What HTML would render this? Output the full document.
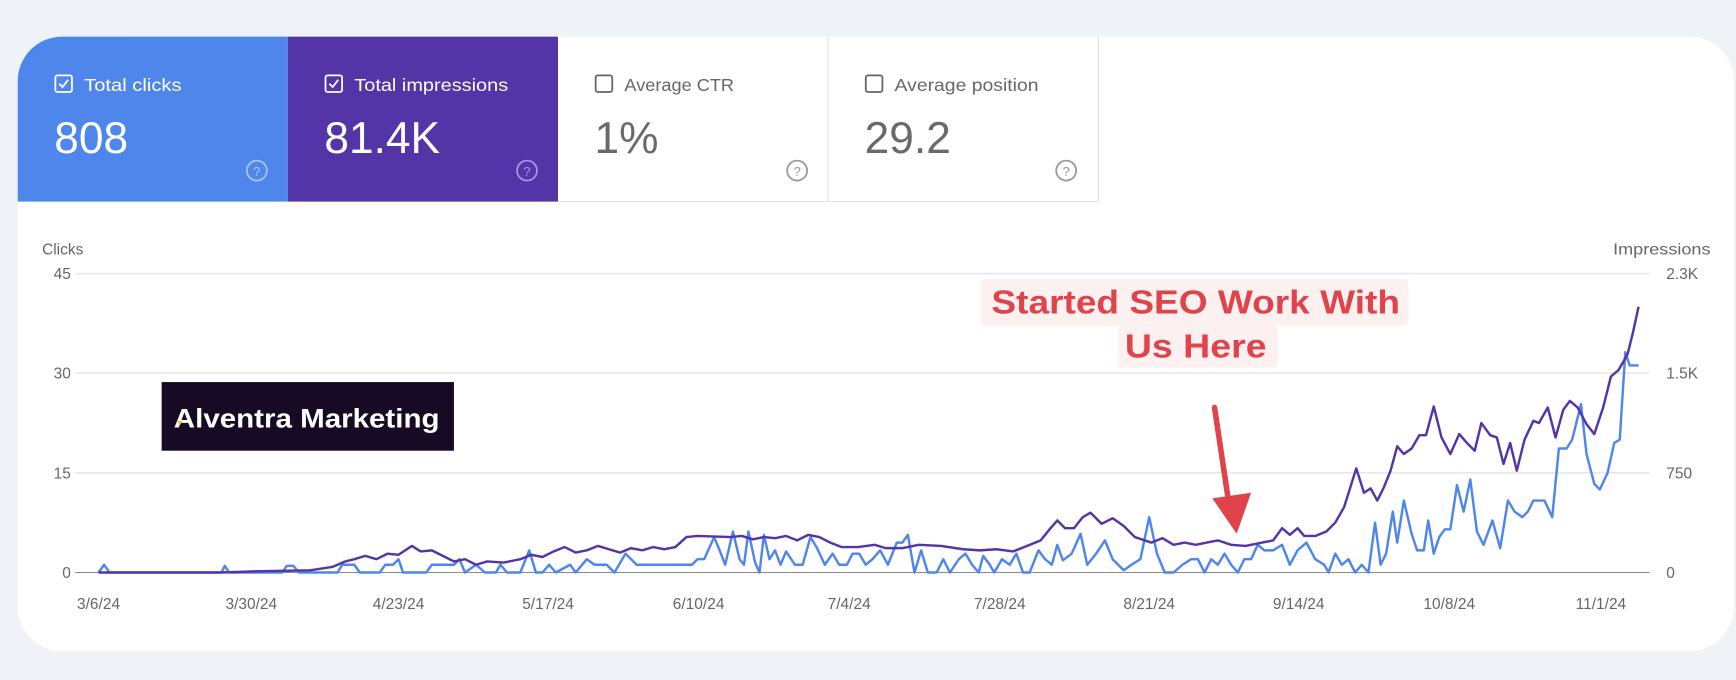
<!DOCTYPE html>
<html><head><meta charset="utf-8"><style>
html,body{margin:0;padding:0;background:#eff2f7;}
svg{display:block;font-family:"Liberation Sans",sans-serif;}
</style></head><body>
<svg width="1736" height="680" viewBox="0 0 1568 614" xmlns="http://www.w3.org/2000/svg">
<rect x="0" y="0" width="1568" height="614" fill="#eff2f7"/>
<rect x="16" y="33" width="1550" height="555" rx="40" fill="#fff"/>
<path d="M16 182 V73 A40 40 0 0 1 56 33 H260 V182 Z" fill="#4f86ec"/>
<rect x="260" y="33" width="244" height="149" fill="#5435a8"/>
<line x1="748" y1="33" x2="748" y2="182" stroke="#e2e2e2"/>
<line x1="992" y1="33" x2="992" y2="182" stroke="#e2e2e2"/>
<line x1="504" y1="182" x2="992" y2="182" stroke="#e2e2e2"/>
<!-- tab 1 -->
<rect x="50" y="68" width="15" height="15" rx="2" fill="none" stroke="#fff" stroke-width="1.6"/>
<path d="M53.5 75.5 l3 3 l5 -6.5" fill="none" stroke="#fff" stroke-width="1.6"/>
<text x="76" y="82" font-size="16" fill="#fff" textLength="88" lengthAdjust="spacingAndGlyphs">Total clicks</text>
<text x="49" y="138" font-size="40" fill="#fff">808</text>
<circle cx="232" cy="154" r="9" fill="none" stroke="#a9c4f5" stroke-width="1.6"/>
<text x="232" y="159" font-size="12" fill="#a9c4f5" text-anchor="middle">?</text>
<!-- tab 2 -->
<rect x="294" y="68" width="15" height="15" rx="2" fill="none" stroke="#fff" stroke-width="1.6"/>
<path d="M297.5 75.5 l3 3 l5 -6.5" fill="none" stroke="#fff" stroke-width="1.6"/>
<text x="320" y="82" font-size="16" fill="#fff" textLength="139" lengthAdjust="spacingAndGlyphs">Total impressions</text>
<text x="293" y="138" font-size="40" fill="#fff">81.4K</text>
<circle cx="476" cy="154" r="9" fill="none" stroke="#a994e0" stroke-width="1.6"/>
<text x="476" y="159" font-size="12" fill="#a994e0" text-anchor="middle">?</text>
<!-- tab 3 -->
<rect x="538" y="68" width="15" height="15" rx="2" fill="none" stroke="#666" stroke-width="1.6"/>
<text x="564" y="82" font-size="16" fill="#666" textLength="99" lengthAdjust="spacingAndGlyphs">Average CTR</text>
<text x="537" y="138" font-size="40" fill="#6a6a6a">1%</text>
<circle cx="720" cy="154" r="9" fill="none" stroke="#999" stroke-width="1.6"/>
<text x="720" y="159" font-size="12" fill="#999" text-anchor="middle">?</text>
<!-- tab 4 -->
<rect x="782" y="68" width="15" height="15" rx="2" fill="none" stroke="#666" stroke-width="1.6"/>
<text x="808" y="82" font-size="16" fill="#666" textLength="130" lengthAdjust="spacingAndGlyphs">Average position</text>
<text x="781" y="138" font-size="40" fill="#6a6a6a">29.2</text>
<circle cx="963" cy="154" r="9" fill="none" stroke="#999" stroke-width="1.6"/>
<text x="963" y="159" font-size="12" fill="#999" text-anchor="middle">?</text>
<!-- axes -->
<g font-size="14" fill="#666">
<text x="38" y="230">Clicks</text>
<text x="1545" y="230" text-anchor="end" textLength="88" lengthAdjust="spacingAndGlyphs">Impressions</text>
<text x="64" y="252" text-anchor="end">45</text>
<text x="64" y="342" text-anchor="end">30</text>
<text x="64" y="432" text-anchor="end">15</text>
<text x="64" y="522" text-anchor="end">0</text>
<text x="1505" y="252">2.3K</text>
<text x="1505" y="342">1.5K</text>
<text x="1505" y="432">750</text>
<text x="1505" y="522">0</text>
</g>
<g stroke="#e8e8e8" stroke-width="1.5">
<line x1="68" y1="247" x2="1490" y2="247"/>
<line x1="68" y1="337" x2="1490" y2="337"/>
<line x1="68" y1="427" x2="1490" y2="427"/>
</g>
<line x1="68" y1="517" x2="1490" y2="517" stroke="#8a8a8a" stroke-width="1"/>
<g font-size="14" fill="#666" text-anchor="middle">
<text x="89" y="550">3/6/24</text><text x="227" y="550">3/30/24</text><text x="360" y="550">4/23/24</text>
<text x="495" y="550">5/17/24</text><text x="631" y="550">6/10/24</text><text x="767" y="550">7/4/24</text>
<text x="903" y="550">7/28/24</text><text x="1038" y="550">8/21/24</text><text x="1173" y="550">9/14/24</text>
<text x="1309" y="550">10/8/24</text><text x="1446" y="550">11/1/24</text>
</g>
<polyline fill="none" stroke="#4f86ec" stroke-width="2.2" stroke-linejoin="round" points="89,517 94,510 99,517 200,517 203,511 207,517 255,517 259,511 265,511 270,517 305,517 309,510 320,510 325,517 343,517 348,510 355,510 360,505 364,517 385,517 390,510 410,510 415,505 420,517 430,510 438,517 448,517 452,510 458,517 470,517 478,497 484,517 490,517 496,510 502,517 515,510 520,517 530,505 537,510 548,510 555,517 565,500 575,510 600,510 625,510 630,505 636,505 645,485 650,497 655,510 662,480 668,505 672,510 676,480 682,508 686,517 690,483 695,505 700,497 705,510 710,498 718,510 725,510 732,485 738,495 745,510 752,500 758,510 765,510 770,500 776,500 782,510 788,505 795,497 802,510 810,490 815,490 820,483 826,517 832,497 838,517 846,517 852,505 858,517 866,505 872,500 878,510 884,517 888,502 894,510 898,517 905,505 912,510 918,500 924,517 930,517 938,497 944,505 950,510 955,492 960,506 968,500 976,482 982,510 990,500 998,488 1005,505 1015,515 1022,510 1030,505 1038,467 1045,500 1052,517 1060,517 1068,510 1076,505 1082,505 1088,517 1094,505 1100,510 1106,500 1112,510 1118,517 1124,505 1130,505 1136,492 1142,497 1150,497 1158,492 1165,510 1172,497 1180,490 1188,505 1196,510 1200,517 1206,500 1212,510 1218,505 1224,517 1230,510 1236,517 1242,472 1247,510 1252,500 1258,462 1262,490 1268,452 1275,482 1280,497 1286,497 1290,470 1295,500 1300,485 1305,478 1310,478 1316,438 1322,462 1328,433 1334,480 1340,492 1348,470 1355,495 1362,452 1368,462 1375,467 1380,462 1385,452 1395,452 1402,467 1408,405 1415,405 1420,397 1428,365 1433,410 1440,437 1445,442 1452,427 1458,400 1463,397 1468,318 1472,330 1480,330"/>
<polyline fill="none" stroke="#5435a8" stroke-width="2.2" stroke-linejoin="round" points="89,517 200,517 230,516 280,515 300,512 312,507 320,505 330,502 340,505 350,500 360,501 372,493 380,498 390,497 400,502 410,507 420,505 430,510 440,507 455,508 470,505 480,501 490,503 500,498 510,494 520,499 530,497 540,493 550,496 560,499 570,495 580,497 590,494 600,496 610,494 620,485 630,484 660,485 670,484 680,487 690,485 700,486 710,484 720,488 730,483 740,485 750,490 760,494 775,494 790,492 800,495 815,495 830,492 850,493 870,496 885,497 900,496 915,498 930,492 940,488 948,478 955,470 962,477 970,477 978,467 985,463 995,473 1005,468 1015,475 1025,485 1040,490 1050,486 1060,492 1070,490 1080,492 1090,490 1100,488 1112,492 1125,493 1140,490 1150,488 1158,477 1165,483 1172,477 1178,484 1188,484 1198,480 1206,472 1214,458 1225,423 1232,445 1238,441 1244,452 1250,440 1256,425 1262,403 1268,410 1275,405 1282,393 1288,393 1295,367 1302,395 1310,410 1318,392 1325,400 1332,407 1338,382 1346,393 1352,395 1358,419 1364,400 1370,425 1377,397 1385,380 1390,382 1398,368 1405,395 1412,370 1418,362 1425,368 1433,383 1440,392 1448,368 1455,340 1462,334 1470,320 1475,300 1480,277"/>
<!-- logo -->
<rect x="146" y="345" width="264" height="62" fill="#170a24"/>
<text x="157" y="386" font-size="24" font-weight="bold" fill="#fff" textLength="240" lengthAdjust="spacingAndGlyphs">Alventra Marketing</text>
<path d="M160 380 l5 0 l-2.5 4 z" fill="#f5c518"/>
<!-- annotation -->
<rect x="886" y="252" width="386" height="42" rx="4" fill="#fdf0f0"/>
<rect x="1010" y="294" width="144" height="38" rx="4" fill="#fdf0f0"/>
<g font-size="30" font-weight="bold" fill="#e0434a" text-anchor="middle">
<text x="1080" y="283" textLength="369" lengthAdjust="spacingAndGlyphs">Started SEO Work With</text>
<text x="1080" y="323" textLength="128" lengthAdjust="spacingAndGlyphs">Us Here</text>
</g>
<line x1="1097" y1="368" x2="1110" y2="455" stroke="#e0434a" stroke-width="5" stroke-linecap="round"/>
<path d="M1095 450 L1130 445 L1117 482 Z" fill="#e0434a"/>
</svg>
</body></html>
